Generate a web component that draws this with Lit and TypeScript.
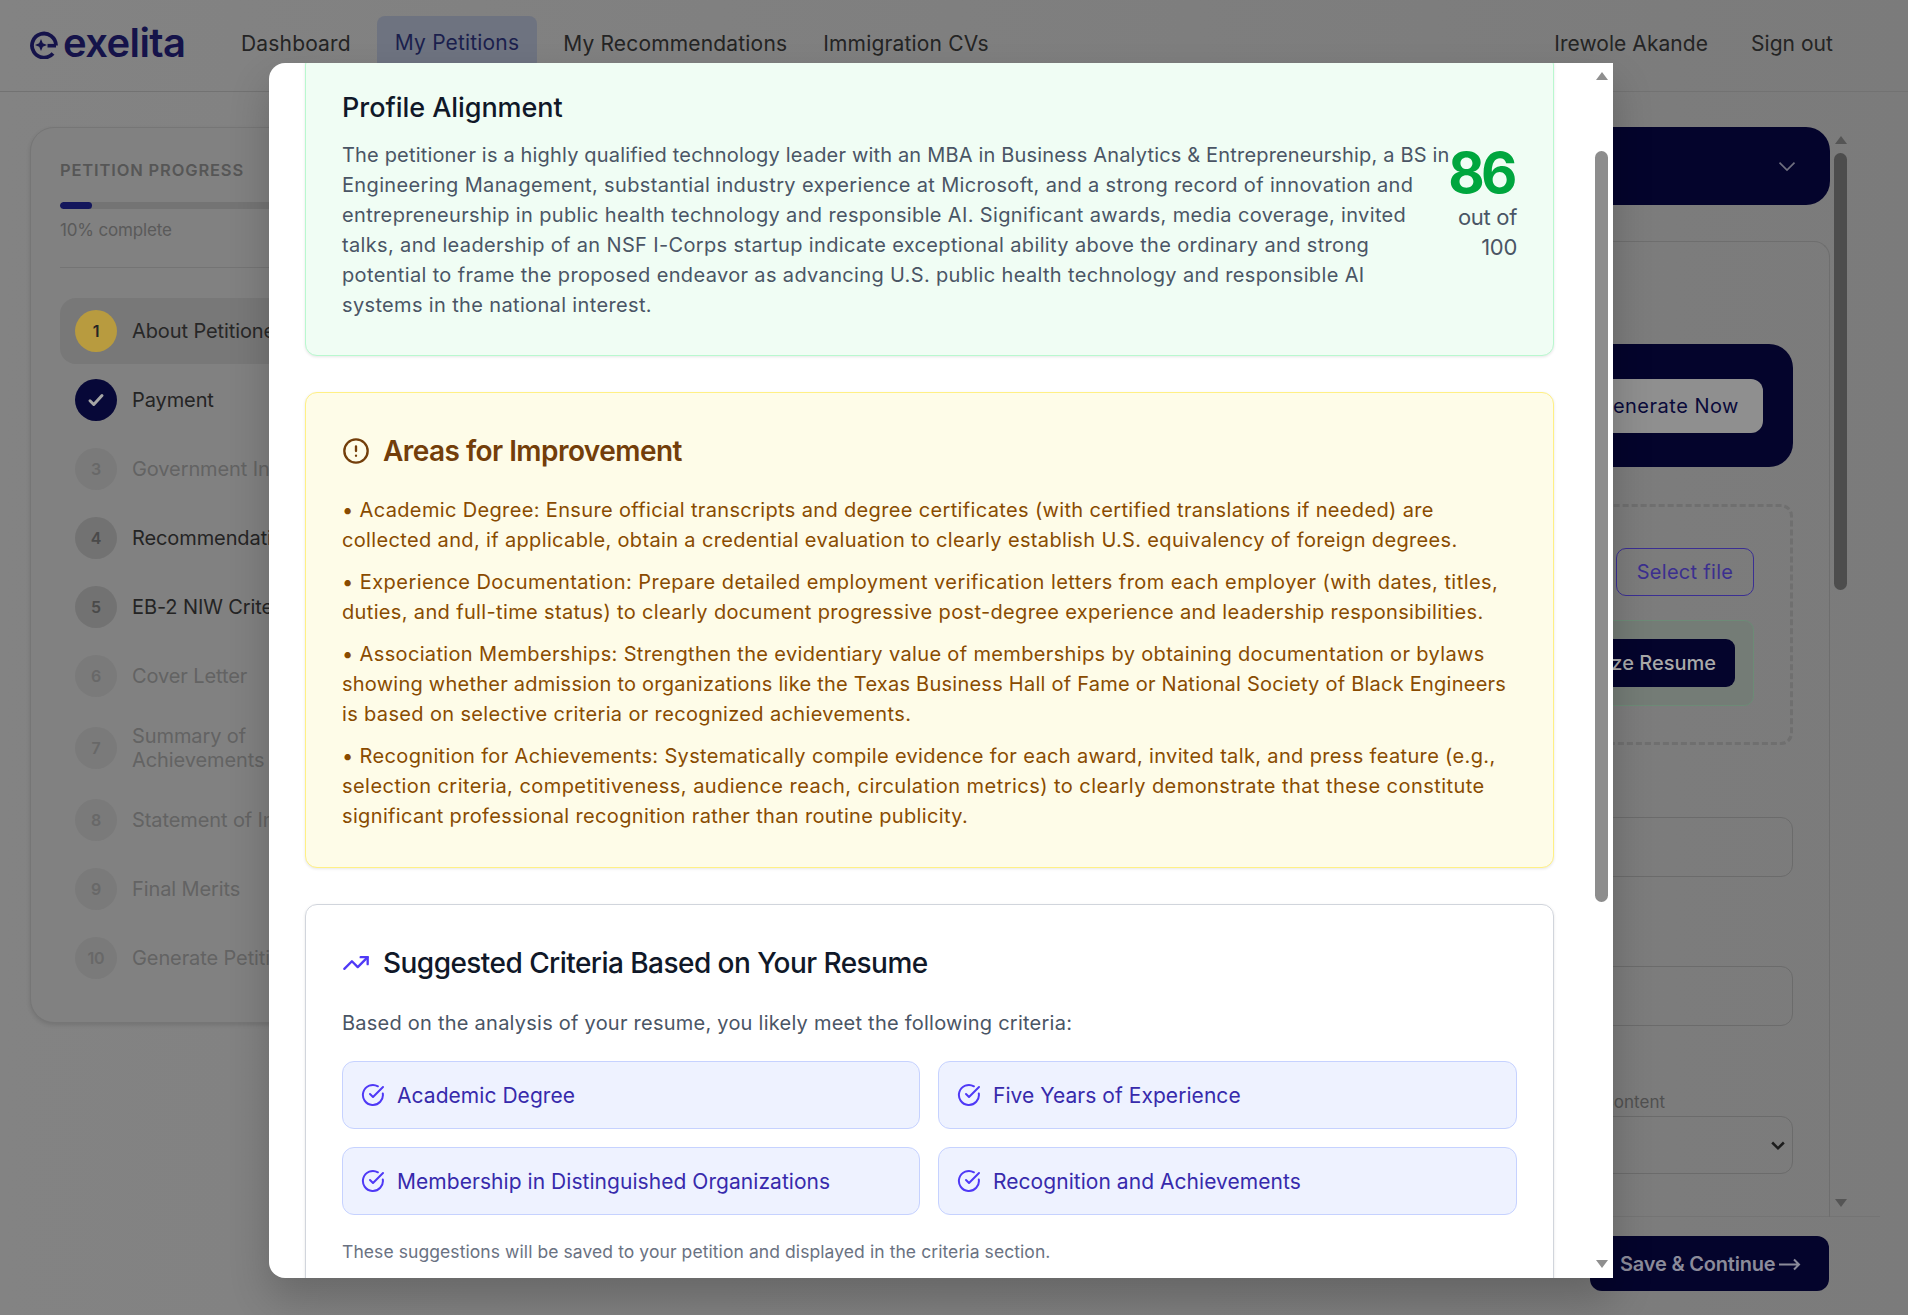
import { LitElement, html, css, svg } from "lit";
import { customElement } from "lit/decorators.js";

const checkCircle = svg`<path d="M21.8 10.5A10 10 0 1 1 16.9 3.3"/><path d="m9 11 3 3L22 4"/>`;

type Step = { n: string; label: string[]; state: "active" | "done" | "open" | "locked" };
const STEPS: Step[] = [
  { n: "1", label: ["About Petitioner"], state: "active" },
  { n: "", label: ["Payment"], state: "done" },
  { n: "3", label: ["Government Information"], state: "locked" },
  { n: "4", label: ["Recommendations"], state: "open" },
  { n: "5", label: ["EB-2 NIW Criteria"], state: "open" },
  { n: "6", label: ["Cover Letter"], state: "locked" },
  { n: "7", label: ["Summary of", "Achievements"], state: "locked" },
  { n: "8", label: ["Statement of Intent"], state: "locked" },
  { n: "9", label: ["Final Merits"], state: "locked" },
  { n: "10", label: ["Generate Petition"], state: "locked" },
];

/* Lines whose fallback-font width strays from the reference get a spacing class. */
const SPACING = new Map<string, string>([
  ["The petitioner is a highly qualified technology leader with an MBA in Business Analytics & Entrepreneurship, a BS in", "tight"],
  ["showing whether admission to organizations like the Texas Business Hall of Fame or National Society of Black Engineers", "snug"],
  ["• Experience Documentation: Prepare detailed employment verification letters from each employer (with dates, titles,", "loose"],
  ["selection criteria, competitiveness, audience reach, circulation metrics) to clearly demonstrate that these constitute", "loose"],
]);

const ALIGN = [
  "The petitioner is a highly qualified technology leader with an MBA in Business Analytics & Entrepreneurship, a BS in",
  "Engineering Management, substantial industry experience at Microsoft, and a strong record of innovation and",
  "entrepreneurship in public health technology and responsible AI. Significant awards, media coverage, invited",
  "talks, and leadership of an NSF I-Corps startup indicate exceptional ability above the ordinary and strong",
  "potential to frame the proposed endeavor as advancing U.S. public health technology and responsible AI",
  "systems in the national interest.",
];

const IMPROVE = [
  [
    "• Academic Degree: Ensure official transcripts and degree certificates (with certified translations if needed) are",
    "collected and, if applicable, obtain a credential evaluation to clearly establish U.S. equivalency of foreign degrees.",
  ],
  [
    "• Experience Documentation: Prepare detailed employment verification letters from each employer (with dates, titles,",
    "duties, and full-time status) to clearly document progressive post-degree experience and leadership responsibilities.",
  ],
  [
    "• Association Memberships: Strengthen the evidentiary value of memberships by obtaining documentation or bylaws",
    "showing whether admission to organizations like the Texas Business Hall of Fame or National Society of Black Engineers",
    "is based on selective criteria or recognized achievements.",
  ],
  [
    "• Recognition for Achievements: Systematically compile evidence for each award, invited talk, and press feature (e.g.,",
    "selection criteria, competitiveness, audience reach, circulation metrics) to clearly demonstrate that these constitute",
    "significant professional recognition rather than routine publicity.",
  ],
];

const CRITERIA = [
  "Academic Degree",
  "Five Years of Experience",
  "Membership in Distinguished Organizations",
  "Recognition and Achievements",
];

@customElement("app-root")
export class AppRoot extends LitElement {
  static styles = css`
    :host {
      display: block;
      position: relative;
      width: 1908px;
      height: 1315px;
      overflow: hidden;
      font-family: "Inter", "Liberation Sans", sans-serif;
      background: linear-gradient(90deg, #838383, #7b7b7b);
      color: #242424;
    }
    * { box-sizing: border-box; }
    .top {
      height: 92px;
      display: flex;
      align-items: center;
      padding: 0 75px 5px 30px;
      border-bottom: 1px solid #727272;
      font-size: 21px;
      letter-spacing: 0.05px;
    }
    .logo { display: flex; align-items: center; gap: 5px; width: 211px; color: #15134a; }
    .logo svg { width: 28px; height: 28px; margin-top: 3px; }
    .logo b { font-size: 40px; font-weight: 600; letter-spacing: -0.6px; line-height: 46px; }
    .nav { display: flex; align-items: center; gap: 26px; flex: 1; letter-spacing: 0.17px; }
    .nav a.on {
      padding: 14px 18px;
      line-height: 26px;
      background: #6e7380;
      color: #1b1f4d;
      border-radius: 8px;
    }
    .nav a.cv { margin-left: 10px; }
    .user { display: flex; gap: 43px; }

    .page { display: flex; padding-left: 30px; height: 1223px; }
    .side {
      width: 380px;
      height: 896px;
      margin-top: 35px;
      padding: 29px 29px;
      border: 1px solid #767676;
      border-radius: 24px;
      background: #818181;
      box-shadow: 0 2px 4px rgba(0, 0, 0, 0.12);
    }
    .side h4 { margin: 0; font-size: 16.5px; line-height: 26px; font-weight: 600; letter-spacing: 0.85px; color: #565656; }
    .bar { height: 7px; margin-top: 19px; border-radius: 4px; background: #747474; overflow: hidden; }
    .bar i { display: block; width: 10%; height: 100%; border-radius: 4px; background: #14175c; }
    .pct { margin-top: 9px; font-size: 17px; line-height: 24px; color: #5a5a5a; letter-spacing: -0.15px; }
    .side hr { margin: 25px 0 30px; border: 0; border-top: 1px solid #747474; }
    .steps { display: flex; flex-direction: column; gap: 3px; }
    .step {
      display: flex;
      align-items: center;
      gap: 15px;
      min-height: 66px;
      padding: 12px 15px;
      border-radius: 16px;
      font-size: 20px;
      line-height: 24px;
      letter-spacing: -0.1px;
      color: #636363;
      white-space: nowrap;
    }
    .step.active { background: #787878; color: #272727; }
    .step.done, .step.open { color: #242424; }
    .num {
      flex: none;
      width: 42px;
      height: 42px;
      border-radius: 50%;
      display: flex;
      align-items: center;
      justify-content: center;
      font-size: 16px;
      font-weight: 600;
      background: #7a7a7a;
      color: #686868;
    }
    .active .num { background: #b89b3f; color: #252525; }
    .done .num { background: #070838; color: #a5a5a5; }
    .open .num { background: #727272; color: #4a4a4a; }

    .main { width: 1440px; margin-left: 30px; display: flex; flex-direction: column; }
    .scroll { height: 1125px; border-bottom: 1px solid #747474; display: flex; padding-top: 35px; }
    .col { width: 1390px; }
    .rail { width: 30px; position: relative; }
    .dark {
      height: 78px;
      border-radius: 24px;
      background: #04042c;
      display: flex;
      align-items: center;
      justify-content: flex-end;
      padding-right: 33px;
      color: #6f6f7f;
    }
    .dark svg { width: 20px; height: 20px; }
    .form {
      height: 976px;
      margin-top: 36px;
      border: 1px solid #6e6e6e;
      border-bottom: 0;
      border-radius: 16px 16px 0 0;
      padding: 102px 36px 0;
    }
    .banner {
      height: 123px;
      border-radius: 24px;
      background: #04042c;
      display: flex;
      align-items: center;
      justify-content: flex-end;
      padding-right: 30px;
    }
    .gen {
      height: 54px;
      padding: 0 24px;
      border-radius: 12px;
      background: #8f8f8f;
      color: #0a0a3a;
      font-size: 20px;
      letter-spacing: 0.5px;
      line-height: 54px;
    }
    .drop {
      height: 241px;
      margin-top: 37px;
      border: 3px dashed #6f6f6f;
      border-radius: 12px;
      padding: 41px 36px 0;
      display: flex;
      flex-direction: column;
      align-items: flex-end;
    }
    .sel {
      width: 138px;
      height: 48px;
      border: 1px solid #3b2f93;
      border-radius: 10px;
      display: flex;
      align-items: center;
      justify-content: center;
      color: #3b2f8f;
      font-size: 20px;
      letter-spacing: 0.3px;
    }
    .green {
      width: 400px;
      height: 86px;
      margin-top: 24px;
      background: #747c76;
      border: 1px solid #6c8b76;
      border-radius: 10px;
      display: flex;
      align-items: center;
      justify-content: flex-end;
      padding-right: 18px;
    }
    .ana {
      height: 48px;
      padding: 0 19px;
      border-radius: 9px;
      background: #04042c;
      color: #a9a9a9;
      font-size: 20px;
      font-weight: 500;
      line-height: 48px;
    }
    .field { height: 60px; margin-top: 72px; border: 1px solid #6b6b6b; border-radius: 12px; }
    .field.b { margin-top: 89px; }
    .lab { margin: 64px 128px 0 0; text-align: right; font-size: 17px; line-height: 24px; color: #505050; }
    .select {
      height: 58px;
      margin-top: 2px;
      border: 1px solid #6b6b6b;
      border-radius: 12px;
      display: flex;
      align-items: center;
      justify-content: flex-end;
      padding-right: 4px;
      color: #1c1c1c;
    }
    .select svg { width: 20px; height: 20px; }
    .foot { flex: 1; display: flex; justify-content: flex-end; padding: 19px 51px 0 0; }
    .save {
      width: 239px;
      height: 55px;
      border-radius: 12px;
      background: #04042c;
      color: #8b8b9a;
      font-size: 20px;
      font-weight: 600;
      display: flex;
      align-items: center;
      gap: 4px;
      padding-left: 30px;
      letter-spacing: -0.2px;
    }
    .save svg { width: 22px; height: 14px; }

    .track { position: absolute; left: 4px; width: 13px; border-radius: 7px; background: #4d4d4d; }
    .arrow { position: absolute; width: 0; height: 0; border-left: 6px solid transparent; border-right: 6px solid transparent; }
    .up { left: 5px; top: 9px; border-bottom: 8px solid #555; }
    .down { left: 5px; top: 1072px; border-top: 8px solid #555; }
    .thumb { top: 26px; height: 437px; }

    .overlay { position: absolute; inset: 0; padding: 63px 295px 37px 269px; }
    .modal {
      --ls: 0.35px;
      position: relative;
      height: 100%;
      background: #fff;
      border-radius: 16px 0 0 16px;
      overflow: hidden;
      padding: 0 59px 0 36px;
      color: #101828;
      box-shadow: 0 20px 40px rgba(0, 0, 0, 0.2);
    }
    .mtrack { position: absolute; top: 88px; right: 5px; width: 13px; height: 751px; border-radius: 7px; background: #8d8d8d; }
    .mup { top: 9px; right: 5px; border-bottom: 8px solid #8f8f8f; }
    .mdown { bottom: 10px; right: 5px; border-top: 8px solid #8f8f8f; }
    .card { border: 1px solid #d1d5dc; border-radius: 12px; padding: 36px; margin-bottom: 36px; box-shadow: 0 1px 3px rgba(0, 0, 0, 0.1); }
    .card p, .card h3 { margin: 0; }
    .lines { white-space: nowrap; }
    .tight { letter-spacing: 0.17px; }
    .snug { letter-spacing: 0.24px; }
    .loose { letter-spacing: 0.45px; }
    .align { margin-top: -10px; background: #f0fdf4; border-color: #b9f8cf; height: 303px; }
    .align h3 { font-size: 27px; line-height: 36px; font-weight: 500; letter-spacing: -0.05px; }
    .alignrow { display: flex; justify-content: space-between; margin-top: 14px; font-size: 20px; line-height: 30px; color: #4a5565; letter-spacing: var(--ls); }
    .score { flex: none; display: flex; flex-direction: column; align-items: flex-end; padding-top: 3px; width: 62px; }
    .score b { font-size: 56px; line-height: 60px; font-weight: 700; color: #00a63e; letter-spacing: -3.5px; margin-right: 3px; white-space: nowrap; }
    .score span { font-size: 22px; line-height: 29.5px; letter-spacing: -0.3px; white-space: nowrap; }
    .warn { background: #fefce8; border-color: #fff085; padding-top: 37px; }
    .hd { display: flex; align-items: center; gap: 13px; font-size: 28px; line-height: 42px; font-weight: 600; letter-spacing: -0.55px; }
    .hd svg { flex: none; width: 28px; height: 28px; fill: none; stroke: currentColor; stroke-width: 2; stroke-linecap: round; stroke-linejoin: round; }
    .warn .hd { color: #733e0a; }
    .warnlist { margin-top: 23px; display: flex; flex-direction: column; gap: 12px; font-size: 20px; line-height: 30px; color: #894b00; letter-spacing: var(--ls); }
    .sug { height: 500px; padding-top: 37px; }
    .sug .hd { font-weight: 500; }
    .sug .hd svg { color: #4f39f6; }
    .intro { margin-top: 24px !important; font-size: 20px; line-height: 30px; color: #4a5565; letter-spacing: 0.24px; }
    .grid { margin-top: 23px; display: grid; grid-template-columns: 578px 579px; gap: 18px; }
    .chip {
      height: 68px;
      display: flex;
      align-items: center;
      gap: 12px;
      padding: 0 18px;
      background: #eef2ff;
      border: 1px solid #c6d2ff;
      border-radius: 12px;
      font-size: 21px;
      color: #372aac;
      letter-spacing: 0.05px;
    }
    .chip svg { flex: none; width: 24px; height: 24px; fill: none; stroke: #4f39f6; stroke-width: 2; stroke-linecap: round; stroke-linejoin: round; }
    .note { margin-top: 24px !important; font-size: 17.5px; line-height: 26px; color: #6a7282; letter-spacing: 0.08px; }
  `;

  private lines(rows: string[]) {
    return html`<div class="lines">
      ${rows.map((r, i) => html`${i ? html`<br />` : ""}<span class=${SPACING.get(r) ?? ""}>${r}</span>`)}
    </div>`;
  }

  render() {
    return html`
      <header class="top">
        <div class="logo">
          <svg viewBox="0 0 28 28" fill="none" stroke="currentColor">
            <path d="M26 14.500A12 12 0 1 0 23 22.500" stroke-width="3.800" />
            <path d="M17.500 14.700H26" stroke-width="3.600" />
            <path d="M11 8l1.800 4.200 4.200 1.800-4.200 1.800-1.800 4.200-1.800-4.200L5 14l4.200-1.800z" fill="currentColor" stroke="none" />
          </svg>
          <b>exelita</b>
        </div>
        <nav class="nav">
          <a>Dashboard</a><a class="on">My Petitions</a><a>My Recommendations</a><a class="cv">Immigration CVs</a>
        </nav>
        <div class="user"><span>Irewole Akande</span><span>Sign out</span></div>
      </header>

      <div class="page">
        <aside class="side">
          <h4>PETITION PROGRESS</h4>
          <div class="bar"><i></i></div>
          <div class="pct">10% complete</div>
          <hr />
          <div class="steps">
            ${STEPS.map(
              (s) => html`<div class="step ${s.state}">
                <span class="num"
                  >${s.state === "done"
                    ? html`<svg width="18" height="18" viewBox="0 0 24 24" fill="none" stroke="currentColor" stroke-width="4" stroke-linecap="round" stroke-linejoin="round"><path d="M4 13l5 5L20 6" /></svg>`
                    : s.n}</span
                >
                <span>${this.lines(s.label)}</span>
              </div>`
            )}
          </div>
        </aside>

        <main class="main">
          <div class="scroll">
            <div class="col">
              <div class="dark">
                <svg viewBox="0 0 24 24" fill="none" stroke="currentColor" stroke-width="2"><path d="M3 8l9 9 9-9" /></svg>
              </div>
              <div class="form">
                <div class="banner"><span class="gen">Generate Now</span></div>
                <div class="drop">
                  <span class="sel">Select file</span>
                  <div class="green"><span class="ana">Analyze Resume</span></div>
                </div>
                <div class="field"></div>
                <div class="field b"></div>
                <div class="lab">Content</div>
                <div class="select">
                  <svg viewBox="0 0 24 24" fill="none" stroke="currentColor" stroke-width="3"><path d="M5 9l7 7 7-7" /></svg>
                </div>
              </div>
            </div>
            <div class="rail">
              <span class="arrow up"></span>
              <span class="track thumb"></span>
              <span class="arrow down"></span>
            </div>
          </div>
          <div class="foot">
            <div class="save">
              Save &amp; Continue
              <svg viewBox="0 0 22 14" fill="none" stroke="currentColor" stroke-width="2"><path d="M0 7.500h20M15 2.500l5 5-5 5" /></svg>
            </div>
          </div>
        </main>
      </div>

      <div class="overlay">
        <section class="modal">
          <div class="card align">
            <h3>Profile Alignment</h3>
            <div class="alignrow">
              ${this.lines(ALIGN)}
              <div class="score"><b>86</b><span>out of</span><span>100</span></div>
            </div>
          </div>

          <div class="card warn">
            <div class="hd">
              <svg viewBox="0 0 24 24"><circle cx="12" cy="12" r="10" /><path d="M12 8v4M12 16h.01" /></svg>
              Areas for Improvement
            </div>
            <div class="warnlist">${IMPROVE.map((p) => this.lines(p))}</div>
          </div>

          <div class="card sug">
            <div class="hd">
              <svg viewBox="0 0 24 24"><path d="M22 7l-8.500 8.500-5-5L2 17" /><path d="M16 7h6v6" /></svg>
              Suggested Criteria Based on Your Resume
            </div>
            <p class="intro">Based on the analysis of your resume, you likely meet the following criteria:</p>
            <div class="grid">
              ${CRITERIA.map(
                (c) => html`<div class="chip"><svg viewBox="0 0 24 24">${checkCircle}</svg>${c}</div>`
              )}
            </div>
            <p class="note">These suggestions will be saved to your petition and displayed in the criteria section.</p>
          </div>

          <span class="arrow mup"></span>
          <span class="mtrack"></span>
          <span class="arrow mdown"></span>
        </section>
      </div>
    `;
  }
}
